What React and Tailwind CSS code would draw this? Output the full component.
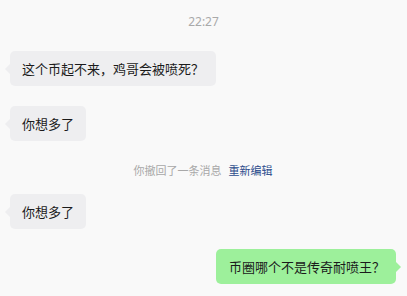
import React from "react";

const font = { fontFamily: '"Noto Sans CJK SC", "Noto Sans", sans-serif' };

function LeftBubble({ children, className = "" }) {
  return (
    <div className={"flex " + className}>
      <div className="relative rounded-[5px] bg-[#eeeef0] h-[35px] pl-[12px] pr-[12px] flex items-center text-[13px] leading-[19px] text-[#1b1b1b]">
        <span className="absolute left-[-5px] top-1/2 -translate-y-1/2 w-0 h-0 border-y-[5px] border-y-transparent border-r-[5px] border-r-[#eeeef0]" />
        {children}
      </div>
    </div>
  );
}

function RightBubble({ children, className = "" }) {
  return (
    <div className={"flex justify-end " + className}>
      <div className="relative rounded-[5px] bg-[#9df09b] h-[35px] pl-[13px] pr-[11px] flex items-center text-[13px] leading-[19px] text-[#1b1b1b]">
        <span className="absolute right-[-5px] top-1/2 -translate-y-1/2 w-0 h-0 border-y-[5px] border-y-transparent border-l-[5px] border-l-[#9df09b]" />
        {children}
      </div>
    </div>
  );
}

export default function App() {
  return (
    <div className="w-[407px] h-[296px] bg-[#f9f9f9] overflow-hidden flex flex-col px-[10px] pr-[11px]" style={font}>
      <div className="pt-[14px] text-center text-[12px] leading-[16px] text-[#a9a9a9] pl-[1px]" style={{ fontFamily: '"Noto Sans", sans-serif' }}>
        22:27
      </div>
      <LeftBubble className="mt-[21px]">这个币起不来，鸡哥会被喷死？</LeftBubble>
      <LeftBubble className="mt-[20px]">你想多了</LeftBubble>
      <div className="mt-[21px] flex justify-center gap-[7px] text-[11px] leading-[16px]">
        <span className="text-[#a8a8a8]">你撤回了一条消息</span>
        <span className="text-[#2c4c8c]">重新编辑</span>
      </div>
      <LeftBubble className="mt-[16px]">你想多了</LeftBubble>
      <RightBubble className="mt-[20px]">币圈哪个不是传奇耐喷王？</RightBubble>
    </div>
  );
}
